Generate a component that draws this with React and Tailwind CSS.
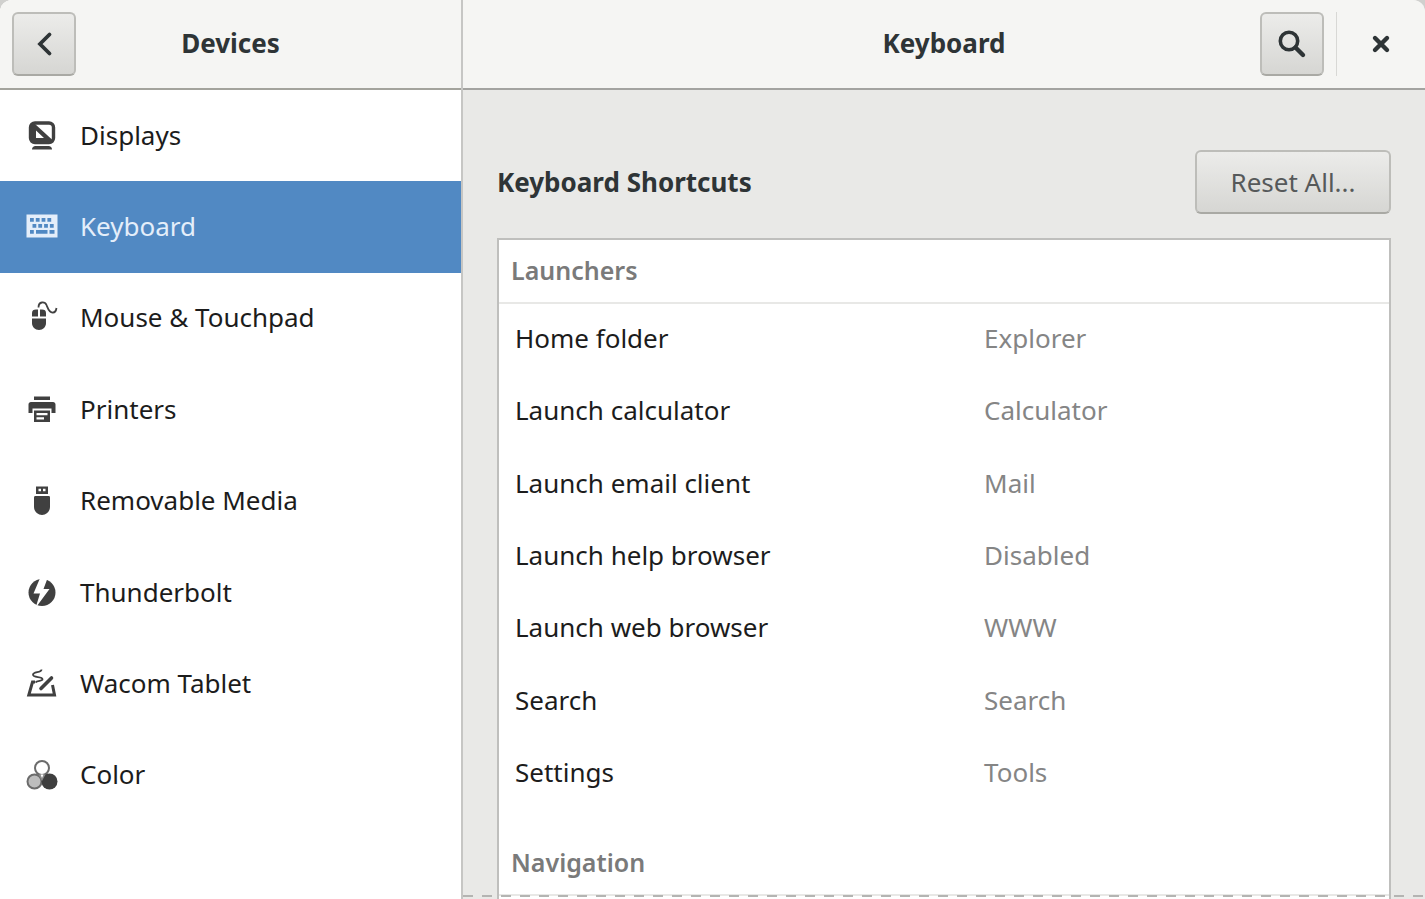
import { useState } from "react";

const strokeProps = {
  fill: "none",
  stroke: "currentColor",
};

function DisplaysIcon() {
  return (
    <svg className="h-8 w-8" viewBox="0 0 32 32" fill="currentColor" aria-hidden="true">
      <rect x="4.5" y="4" width="23" height="19.5" rx="4.5" {...strokeProps} strokeWidth="3.4" />
      <path d="M5 5 L9 5 L26.500 21 V23 H5 Z M10 11.5 V19 H18 Z" fillRule="evenodd" />
      <path d="M9 27 H23 C25 27.500 26 28.500 26 30.500 H6 C6 28.500 7 27.500 9 27 Z" />
    </svg>
  );
}

function KeyboardIcon() {
  return (
    <svg className="h-8 w-8" viewBox="0 0 32 32" fill="currentColor" aria-hidden="true">
      <path
        fillRule="evenodd"
        d="M.5 4.5h31v23h-31z M4 8v3.800h3.800V8z M9.800 8v3.800h3.800V8z M15.600 8v3.800h3.800V8z M21.400 8v3.800h3.800V8z M6.500 14v3.800h3.800V14z M12.300 14v3.800h3.800V14z M18.100 14v3.800h3.800V14z M23.900 14v3.800h3.800V14z M4 20v3.800h3.800V20z M10 20v3.800h11.500V20z M23.500 20v3.800H28.500V20z"
      />
    </svg>
  );
}

function MouseIcon() {
  return (
    <svg className="h-8 w-8" viewBox="0 0 32 32" fill="currentColor" aria-hidden="true">
      <path d="M12 8.5v7H6V12c0-2.500 1.500-3.500 4-3.500z" />
      <path d="M14 8.500h2c2.500 0 4 1 4 3.500v3.500h-6z" />
      <path d="M6 17.500h14V22c0 4-3 7-7 7s-7-3-7-7z" />
      <path
        d="M12.500 6.500C12.500 0 19 .5 20.500 4S23 12 27 11.500c2 0 3-1.500 3.500-4.500"
        {...strokeProps}
        strokeWidth="1.8"
      />
    </svg>
  );
}

function PrinterIcon() {
  return (
    <svg className="h-8 w-8" viewBox="0 0 32 32" fill="currentColor" aria-hidden="true">
      <path d="M8 3.500h16v3.500H8z" />
      <path d="M5 9h22c1.500 0 2.500 1 2.500 2.500V20h-4v-4.500h-19V20h-4v-8.500C2.500 10 3.500 9 5 9z" />
      <path fillRule="evenodd" d="M8 17.500h16V29H8z M10.500 20v2.200h11V20z M10.500 24.300v2.200H18v-2.200z" />
    </svg>
  );
}

function UsbIcon() {
  return (
    <svg className="h-8 w-8" viewBox="0 0 32 32" fill="currentColor" aria-hidden="true">
      <path fillRule="evenodd" d="M10 2.500h12V10H10z M12.500 4.700v2.500H15V4.700z M17 4.700v2.500h2.500V4.700z" />
      <path d="M9.500 12h13c1 0 1.500.5 1.500 1.500V23c0 4.500-4 8-8 8s-8-3.500-8-8v-9.500c0-1 .5-1.500 1.500-1.500z" />
    </svg>
  );
}

function ThunderboltIcon() {
  return (
    <svg className="h-8 w-8" viewBox="0 0 32 32" fill="currentColor" aria-hidden="true">
      <circle cx="16" cy="16.500" r="13.500" />
      <path d="M14.500 1 L7.500 17.500 H14 L9.500 32 L23.500 13 H17.500 L22 1 Z" fill="white" />
    </svg>
  );
}

function TabletIcon() {
  return (
    <svg className="h-8 w-8" viewBox="0 0 32 32" aria-hidden="true">
      <path d="M9 15H6.500L2.800 28H28.500L26.500 18" {...strokeProps} strokeWidth="3" />
      <path d="M25.500 11L15 21.500" {...strokeProps} strokeWidth="3.600" strokeLinecap="round" />
      <path
        d="M15.500 2.500C15.500 6 7 4.500 7 7.800S16.500 9 16.500 12.200C16.500 14.500 11 13 9.500 15.500"
        {...strokeProps}
        strokeWidth="1.800"
      />
    </svg>
  );
}

function ColorIcon() {
  return (
    <svg className="h-8 w-8" viewBox="0 0 32 32" aria-hidden="true">
      <circle cx="16" cy="10" r="7" fill="white" stroke="#6b6b6b" strokeWidth="2" />
      <circle cx="8.500" cy="23.500" r="7" fill="#bdbdbd" stroke="#6b6b6b" strokeWidth="2" />
      <circle cx="23.500" cy="23.500" r="8" fill="#3f3f3f" />
      <path d="M12.500 16.500h7L16 23z" fill="#8a8a8a" />
      <path d="M14.500 16.500h3L16 20z" fill="white" />
    </svg>
  );
}

const devices = [
  { name: "Displays", icon: DisplaysIcon },
  { name: "Keyboard", icon: KeyboardIcon },
  { name: "Mouse & Touchpad", icon: MouseIcon },
  { name: "Printers", icon: PrinterIcon },
  { name: "Removable Media", icon: UsbIcon },
  { name: "Thunderbolt", icon: ThunderboltIcon },
  { name: "Wacom Tablet", icon: TabletIcon },
  { name: "Color", icon: ColorIcon },
];

const launchers = [
  { action: "Home folder", binding: "Explorer" },
  { action: "Launch calculator", binding: "Calculator" },
  { action: "Launch email client", binding: "Mail" },
  { action: "Launch help browser", binding: "Disabled" },
  { action: "Launch web browser", binding: "WWW" },
  { action: "Search", binding: "Search" },
  { action: "Settings", binding: "Tools" },
];

const buttonClass =
  "flex h-16 items-center justify-center rounded-md border-2 border-[#bdbdb9] border-b-[#a9a9a4] bg-linear-to-b from-[#ececea] to-[#d6d6d3]";

const groupClass = "border-b-2 border-[#e8e8e6] px-3 pt-3.5 pb-4 text-[25px] font-semibold text-[#7a7a7a]";

function App() {
  const [selected, setSelected] = useState("Keyboard");

  return (
    <div className="h-screen overflow-hidden bg-[#d0d0ce] font-['Noto_Sans','Open_Sans',sans-serif] text-[26px] leading-8 text-[#1c1c1c]">
      <div className="flex h-full overflow-hidden rounded-t-xl bg-[#e9e9e7]">
        {/* Sidebar */}
        <aside className="flex w-[463px] shrink-0 flex-col border-r-2 border-[#c6c6c4] bg-white">
          <header className="grid h-[90px] shrink-0 grid-cols-[1fr_auto_1fr] items-center border-b-2 border-[#a3a39c] bg-[#f5f5f3] px-3 text-[#2e3436]">
            <button type="button" aria-label="Back" className={`${buttonClass} w-16`}>
              <svg className="h-8 w-8" viewBox="0 0 32 32" aria-hidden="true">
                <path d="M21.500 6.500L12 16l9.500 9.500" {...strokeProps} strokeWidth="3.800" strokeLinecap="round" />
              </svg>
            </button>
            <h2 className="pb-0.5 font-bold">Devices</h2>
          </header>
          <nav>
            <ul className="grid h-[731px] auto-rows-fr">
              {devices.map(({ name, icon: Icon }) => (
                <li key={name}>
                  <button
                    type="button"
                    onClick={() => setSelected(name)}
                    className={`flex h-full w-full items-center gap-[22px] pb-0.5 pl-[26px] text-left ${
                      selected === name ? "bg-[#5189c3] text-[#e4eefa]" : ""
                    }`}
                  >
                    <span className={selected === name ? "" : "text-[#404040]"}>
                      <Icon />
                    </span>
                    {name}
                  </button>
                </li>
              ))}
            </ul>
          </nav>
        </aside>

        {/* Panel */}
        <main className="relative flex min-w-0 flex-1 flex-col overflow-hidden">
          <header className="grid h-[90px] shrink-0 grid-cols-[1fr_auto_1fr] items-center border-b-2 border-[#a3a3a0] bg-[#f5f5f3] text-[#2e3436]">
            <h1 className="col-start-2 pb-0.5 font-bold">Keyboard</h1>
            <div className="flex items-center justify-end gap-3 pr-3">
              <button type="button" aria-label="Search" className={`${buttonClass} w-16`}>
                <svg className="h-8 w-8" viewBox="0 0 32 32" aria-hidden="true">
                  <circle cx="13" cy="13" r="8.700" {...strokeProps} strokeWidth="3.600" />
                  <path d="M19.500 19.500L27 27" {...strokeProps} strokeWidth="4.400" strokeLinecap="round" />
                </svg>
              </button>
              <div className="h-16 w-px bg-[#d8d8d5]" />
              <button type="button" aria-label="Close" className="flex h-16 w-16 items-center justify-center">
                <svg className="h-8 w-8" viewBox="0 0 32 32" aria-hidden="true">
                  <path d="M10 10l12 12M22 10L10 22" {...strokeProps} strokeWidth="4.400" strokeLinecap="round" />
                </svg>
              </button>
            </div>
          </header>

          <section className="px-[34px] pt-[60px]">
            <div className="flex items-center justify-between">
              <h2 className="font-bold text-[#2e3436]">Keyboard Shortcuts</h2>
              <button type="button" className={`${buttonClass} min-w-[196px] px-7 text-[#56595a]`}>
                Reset All...
              </button>
            </div>

            <div className="mt-6 border-2 border-[#bfbfbd] bg-white">
              <h3 className={groupClass}>Launchers</h3>
              <table className="h-[506px] w-full table-fixed text-left">
                <tbody>
                  {launchers.map((item) => (
                    <tr key={item.action}>
                      <th scope="row" className="w-[54.5%] pb-1 pl-4 font-normal">
                        {item.action}
                      </th>
                      <td className="pb-1 text-[#858585]">{item.binding}</td>
                    </tr>
                  ))}
                </tbody>
              </table>
              <h3 className={`${groupClass} mt-[22px]`}>Navigation</h3>
              <div className="h-20" />
            </div>
          </section>

          {/* torn-off edge */}
          <div className="absolute inset-x-0 bottom-0.5 h-0.5 bg-[repeating-linear-gradient(90deg,#b4b4b2_0px,#b4b4b2_10px,transparent_10px,transparent_19px)]" />
        </main>
      </div>
    </div>
  );
}

export default App;
